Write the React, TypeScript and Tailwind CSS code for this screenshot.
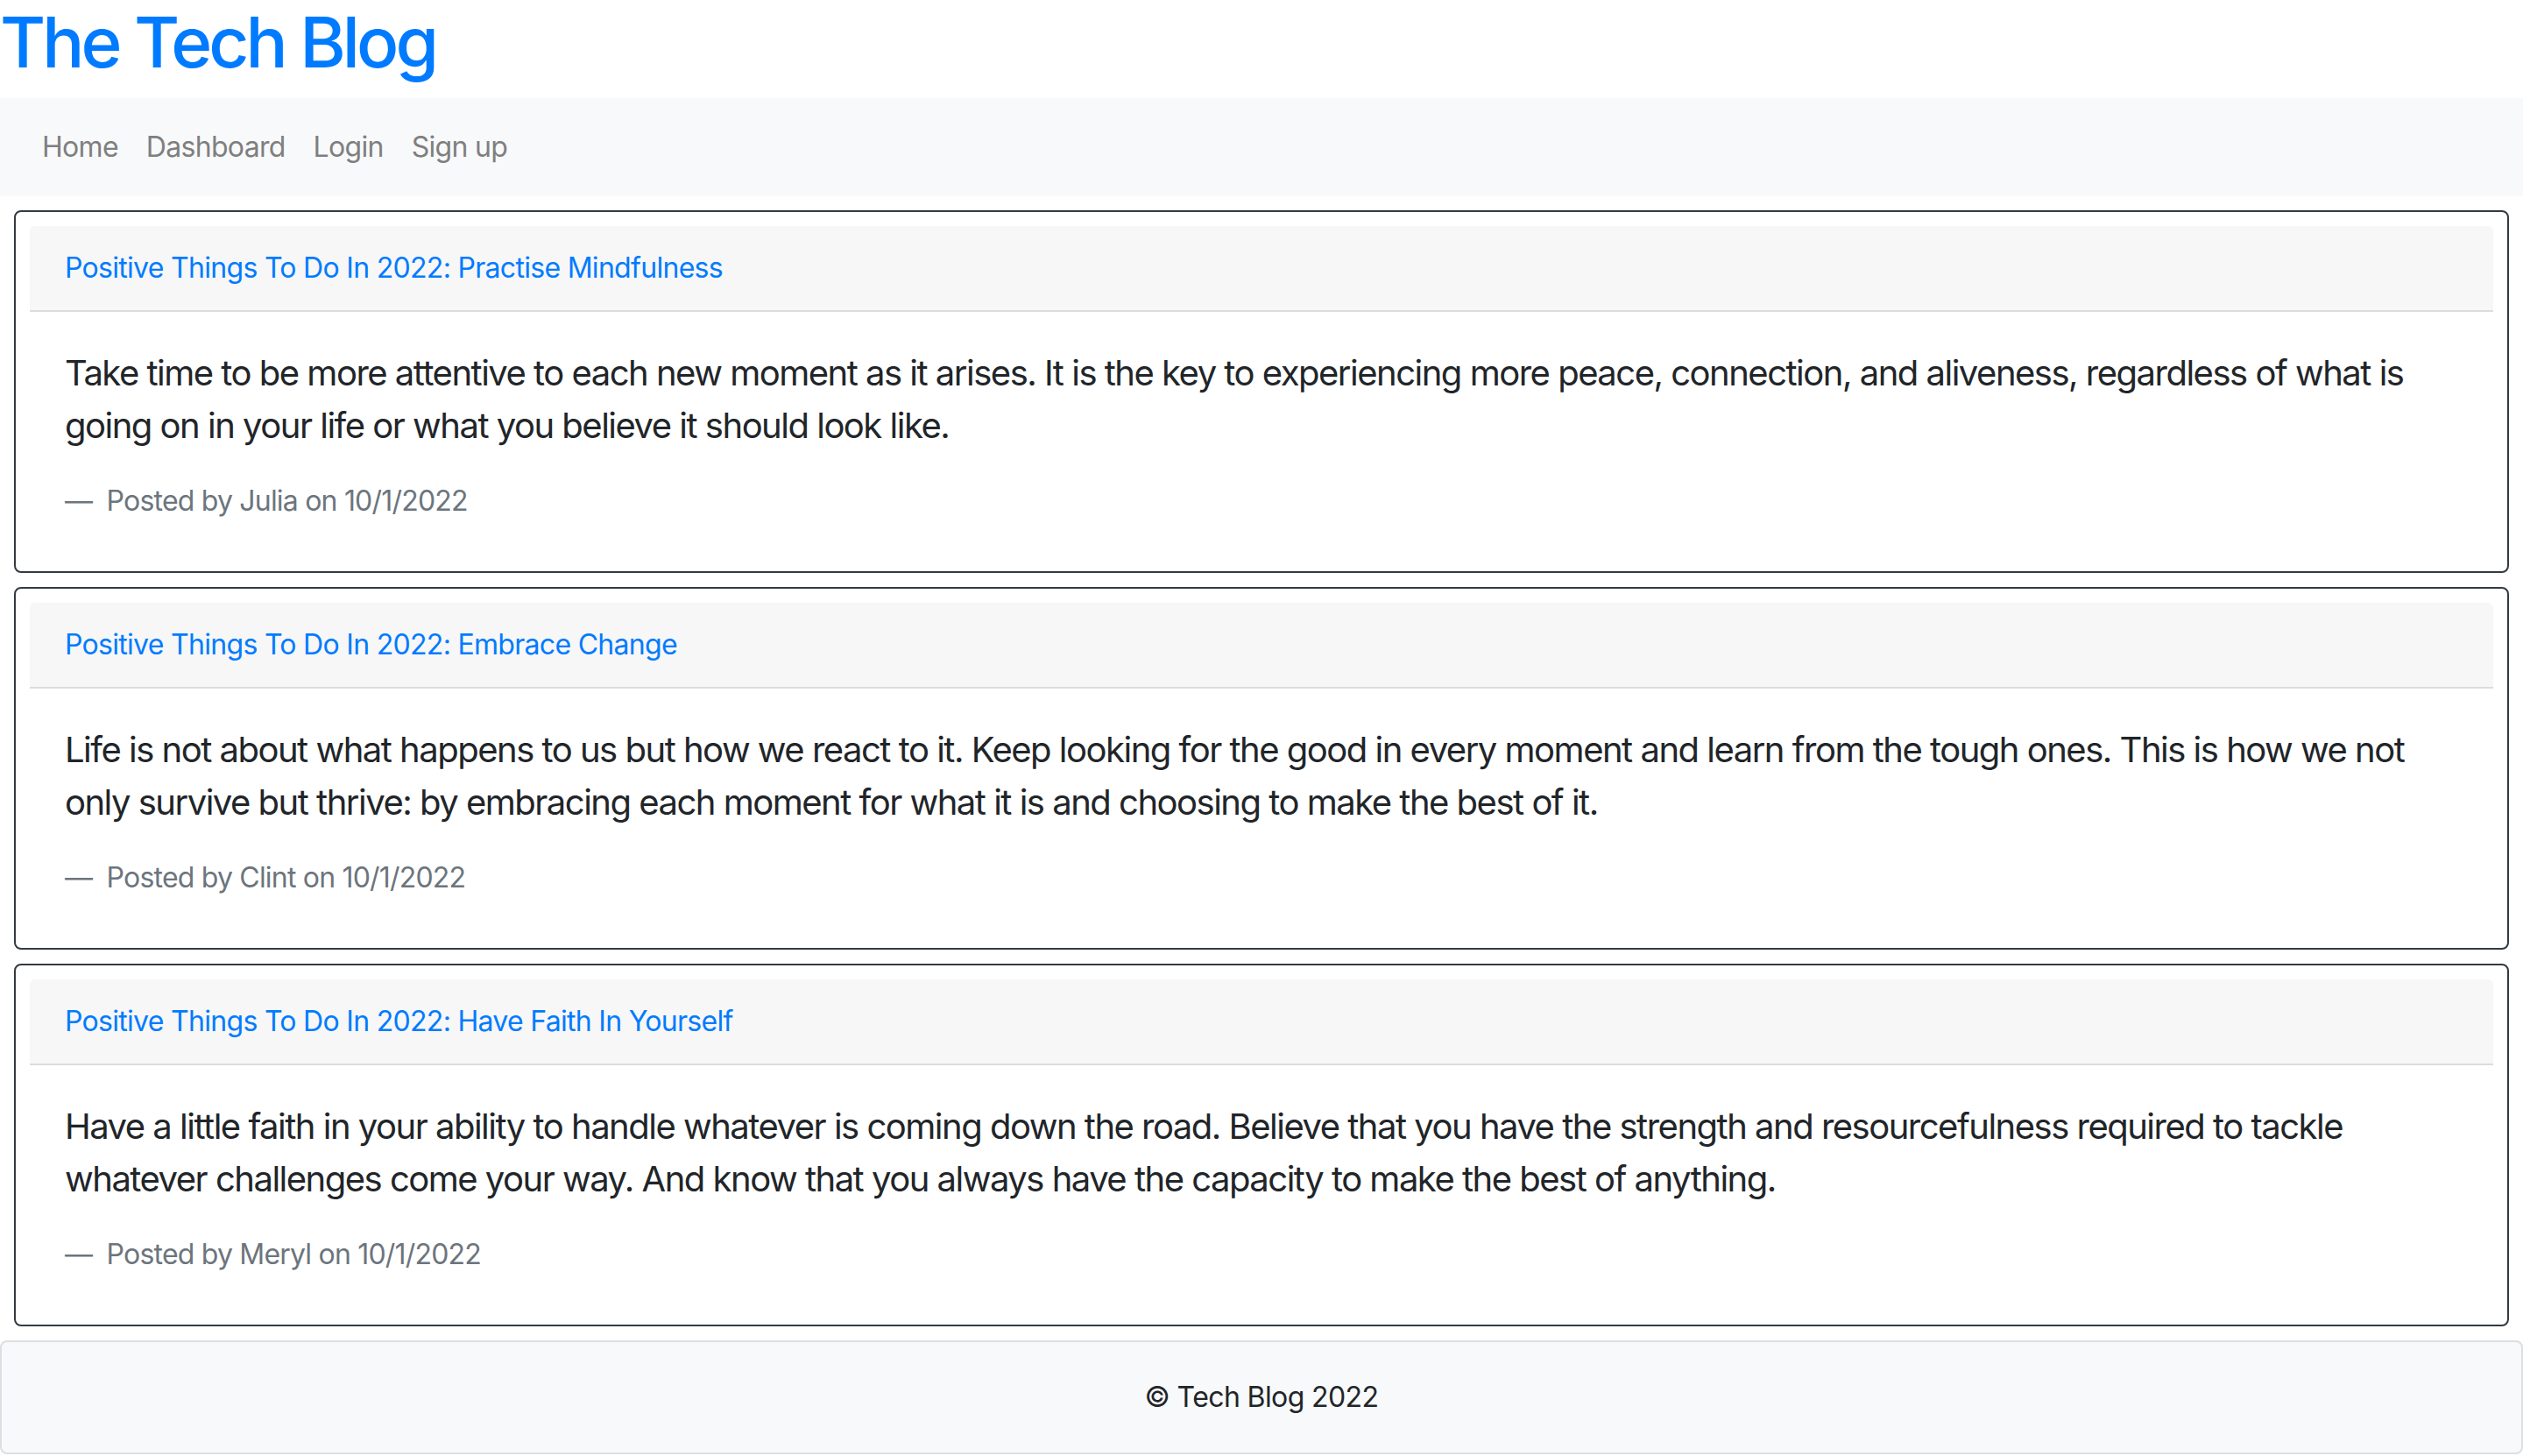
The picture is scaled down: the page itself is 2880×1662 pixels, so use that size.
const posts = [
  {
    title: 'Positive Things To Do In 2022: Practise Mindfulness',
    body: 'Take time to be more attentive to each new moment as it arises. It is the key to experiencing more peace, connection, and aliveness, regardless of what is going on in your life or what you believe it should look like.',
    author: 'Julia',
    date: '10/1/2022',
  },
  {
    title: 'Positive Things To Do In 2022: Embrace Change',
    body: 'Life is not about what happens to us but how we react to it. Keep looking for the good in every moment and learn from the tough ones. This is how we not only survive but thrive: by embracing each moment for what it is and choosing to make the best of it.',
    author: 'Clint',
    date: '10/1/2022',
  },
  {
    title: 'Positive Things To Do In 2022: Have Faith In Yourself',
    body: 'Have a little faith in your ability to handle whatever is coming down the road. Believe that you have the strength and resourcefulness required to tackle whatever challenges come your way. And know that you always have the capacity to make the best of anything.',
    author: 'Meryl',
    date: '10/1/2022',
  },
];

function PostCard({ post }: { post: (typeof posts)[number] }) {
  return (
    <div className="rounded-[8px] border-2 border-[#343a40] p-4">
      <div className="rounded-t-[6px] border-b-2 border-[#dcdcdc] bg-[#f7f7f7] px-10 py-6">
        <a href="#" className="text-[32px] leading-[48px] tracking-[-0.7px] text-[#007bff]">
          {post.title}
        </a>
      </div>
      <div className="p-10">
        <blockquote>
          <p className="mb-8 text-[40px] leading-[60px] tracking-[-1.5px] text-[#212529]">{post.body}</p>
          <footer className="text-[32px] leading-[48px] tracking-[-0.8px] text-[#6c757d]">
            —&nbsp; Posted by {post.author} on {post.date}
          </footer>
        </blockquote>
      </div>
    </div>
  );
}

export default function App() {
  return (
    <div className="min-h-screen bg-white font-['Inter',sans-serif] text-[#212529]">
      <h1 className="mb-4 text-[80px] font-medium leading-[96px] tracking-[-3.9px] text-[#007bff]">
        The Tech Blog
      </h1>
      <nav className="flex h-[112px] items-center bg-[#f8f9fa] px-8">
        <ul className="flex">
          {['Home', 'Dashboard', 'Login', 'Sign up'].map((item) => (
            <li key={item}>
              <a href="#" className="block px-4 py-4 text-[32px] leading-[48px] tracking-[-0.7px] text-[#7f7f80]">
                {item}
              </a>
            </li>
          ))}
        </ul>
      </nav>
      <main className="flex flex-col gap-4 p-4">
        {posts.map((post) => (
          <PostCard key={post.title} post={post} />
        ))}
      </main>
      <footer className="flex h-[130px] items-center justify-center rounded-[8px] border-2 border-[#dcdfe2] bg-[#f8f9fa]">
        <span className="text-[32px] leading-[48px] tracking-[-0.6px] text-[#212529]">© Tech Blog 2022</span>
      </footer>
    </div>
  );
}
